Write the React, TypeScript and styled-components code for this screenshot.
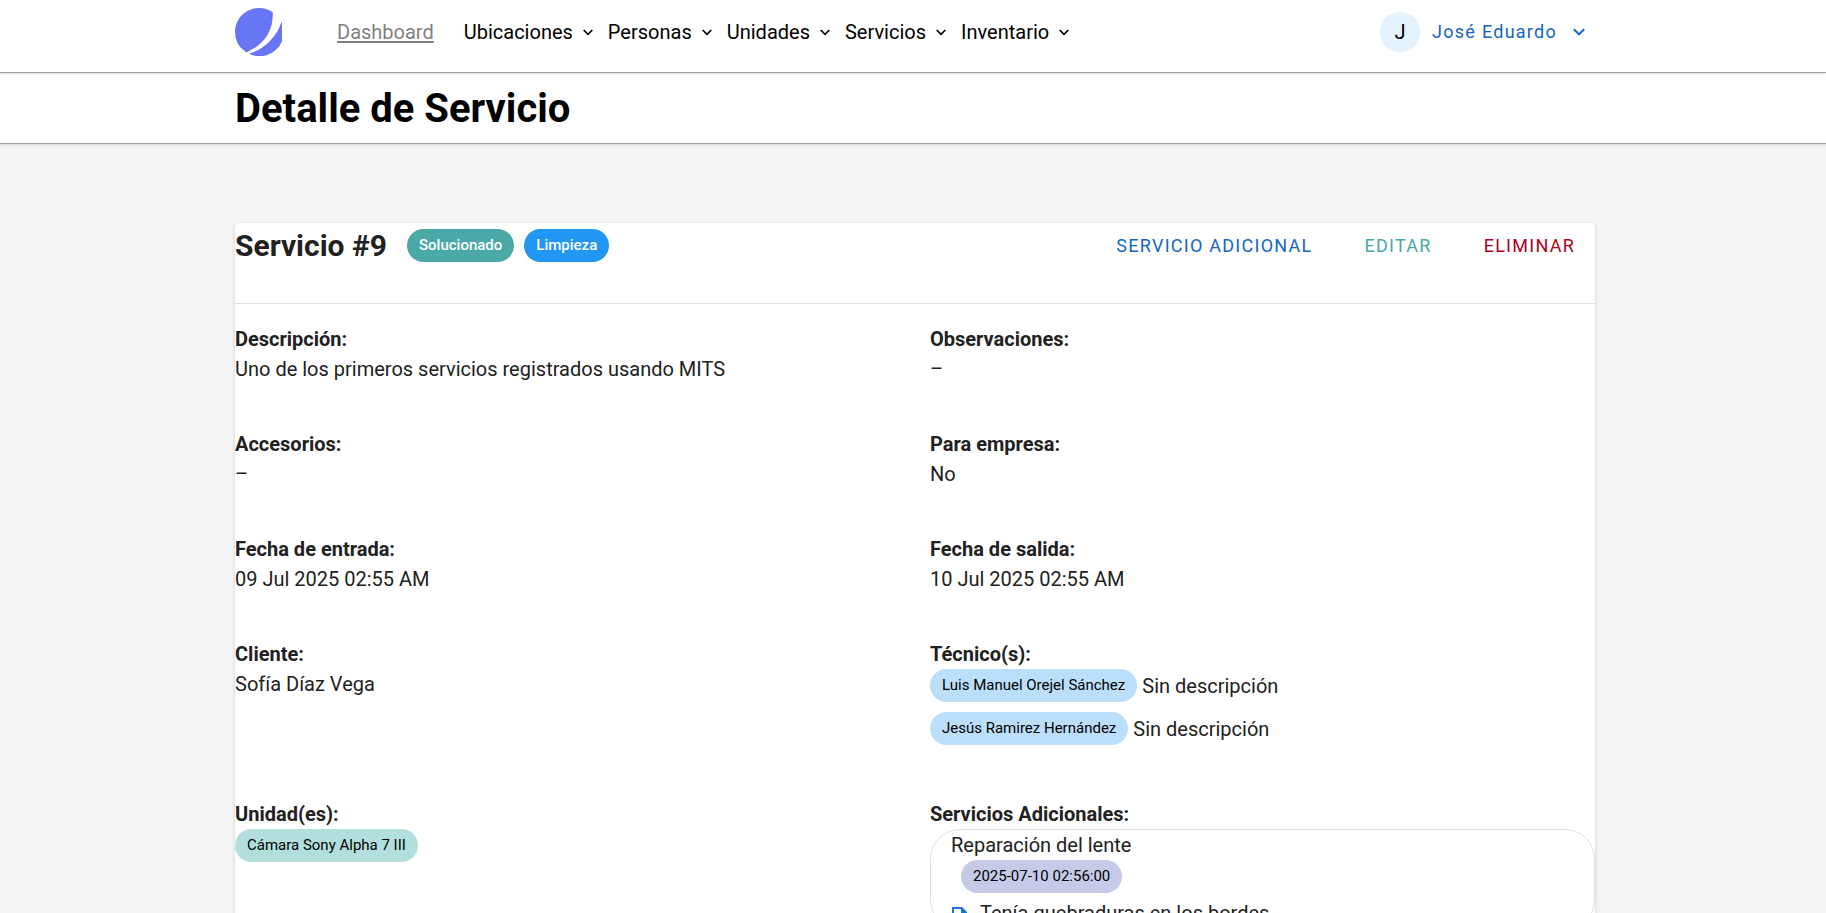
import React from 'react';
import styled, { createGlobalStyle } from 'styled-components';

const GlobalStyle = createGlobalStyle`
  *, *::before, *::after { box-sizing: border-box; }
  body {
    margin: 0;
    background: #f5f5f5;
    color: #212121;
    font-family: Roboto, "Liberation Sans", sans-serif;
    font-size: 20px;
    line-height: 30px;
  }
`;

const Container = styled.div`
  margin: 0 231px 0 235px;
`;

const Bar = styled.div`
  position: relative;
  background: #fff;
  border-bottom: 1px solid #a0a0a0;
  box-shadow: 0 1px 2px rgba(0, 0, 0, 0.15);
`;

const TopBar = styled(Bar)`
  z-index: 1;
`;

const TopBarInner = styled(Container)`
  display: flex;
  align-items: center;
  height: 72px;
  padding-bottom: 8px;
`;

const LogoLink = styled.a`
  display: flex;
  margin-right: 55px;
`;

const Nav = styled.nav`
  display: flex;
  align-items: center;
`;

const DashboardLink = styled.a`
  color: #7f7f7f;
  margin-right: 30px;
  text-underline-offset: 2px;
`;

const NavButton = styled.button`
  display: flex;
  align-items: center;
  gap: 10px;
  margin-right: 15px;
  padding: 0;
  border: 0;
  background: none;
  color: #000;
  font: inherit;
`;

const UserButton = styled.button`
  display: flex;
  align-items: center;
  margin-left: auto;
  padding: 0 10px 0 0;
  border: 0;
  background: none;
  color: #1565c0;
  font: inherit;
  font-size: 18px;
  letter-spacing: 0.07em;
`;

const UserName = styled.span`
  margin: 0 16px 0 12px;
`;

const Avatar = styled.span`
  display: flex;
  align-items: center;
  justify-content: center;
  width: 40px;
  height: 40px;
  border-radius: 50%;
  background: #e3f2fd;
  color: #000;
  font-size: 20px;
  letter-spacing: 0;
`;

const PageTitle = styled.h1`
  margin: 0;
  padding: 6px 0 4px;
  color: #000;
  font-size: 40px;
  line-height: 60px;
`;

const Card = styled.main`
  margin: 79px 231px 60px 235px;
  border-radius: 5px;
  background: #fff;
  box-shadow: 0 1px 4px rgba(0, 0, 0, 0.15);
`;

const CardHeader = styled.div`
  display: flex;
  align-items: flex-start;
  height: 81px;
  border-bottom: 1px solid #e0e0e0;
`;

const CardTitle = styled.h2`
  margin: 0 20px 0 0;
  font-size: 30px;
  line-height: 45px;
`;

const Badges = styled.div`
  display: flex;
  gap: 10px;
  padding-top: 6px;
`;

const Actions = styled.div`
  display: flex;
  gap: 12px;
  margin-left: auto;
`;

const ActionButton = styled.button<{ $color: string }>`
  height: 45px;
  padding: 0 20px;
  border: 0;
  background: none;
  color: ${(p) => p.$color};
  font: inherit;
  font-size: 18px;
  letter-spacing: 0.07em;
  text-transform: uppercase;
`;

const Pill = styled.span<{ $bg: string; $color?: string; $weight?: number }>`
  display: inline-block;
  height: 33px;
  padding: 0 12px;
  border-radius: 17px;
  background: ${(p) => p.$bg};
  color: ${(p) => p.$color ?? '#000'};
  font-size: 15px;
  font-weight: ${(p) => p.$weight ?? 400};
  line-height: 32px;
  vertical-align: top;
`;

const Details = styled.dl`
  display: grid;
  grid-template-columns: 1fr 1fr;
  gap: 45px 30px;
  margin: 0;
  padding: 20px 0 45px;
`;

const Term = styled.dt`
  font-weight: 700;
`;

const Value = styled.dd`
  margin: 0;
`;

const Technicians = styled.ul`
  display: flex;
  flex-direction: column;
  gap: 10px;
  margin: 0;
  padding: 0 0 9px;
  list-style: none;
`;

const Technician = styled.li`
  display: flex;
  gap: 5px;
  height: 33px;
  line-height: 34px;
`;

const ExtraService = styled.section`
  padding: 0 20px 1px;
  border: 1px solid #e0e0e0;
  border-radius: 30px;
`;

const ExtraDate = styled.div`
  display: flex;
  padding: 0 10px 5px;
`;

const ExtraNote = styled.div`
  display: flex;
  align-items: center;
  gap: 9px;
`;

const ChevronIcon = ({ width = 10, strokeWidth = 1.7 }: { width?: number; strokeWidth?: number }) => (
  <svg width={width} height={(width * 7) / 10} viewBox="0 0 10 7" fill="none" stroke="currentColor" strokeWidth={strokeWidth} aria-hidden="true">
    <path d="M0.7 1 5 5.3 9.3 1" />
  </svg>
);

const Logo = () => (
  <svg width="47" height="48" viewBox="0 0 47 48" fill="#6875f5" aria-hidden="true">
    <path d="M11.4 44.4A24 24 0 0 1 0 24C0 10.7 10.7 0 24 0c5 0 9.8 1.5 13.8 4.2C38.4 25.5 27 37.5 11.4 44.4Z" />
    <path d="M14.1 45.7A24 24 0 0 0 46.5 14.1C41.5 29.5 29 41.5 14.1 45.7Z" />
  </svg>
);

const NoteIcon = () => (
  <svg width="20" height="20" viewBox="0 0 20 20" fill="none" stroke="#1976d2" strokeWidth="2" aria-hidden="true">
    <path d="M2 5h8l5 5v9H2z" />
    <path d="M10 4h1l5 5v2h-6z" fill="#1976d2" stroke="none" />
  </svg>
);

const menus = ['Ubicaciones', 'Personas', 'Unidades', 'Servicios', 'Inventario'];

const fields: [string, React.ReactNode][] = [
  ['Descripción:', 'Uno de los primeros servicios registrados usando MITS'],
  ['Observaciones:', '–'],
  ['Accesorios:', '–'],
  ['Para empresa:', 'No'],
  ['Fecha de entrada:', '09 Jul 2025 02:55 AM'],
  ['Fecha de salida:', '10 Jul 2025 02:55 AM'],
  ['Cliente:', 'Sofía Díaz Vega'],
  [
    'Técnico(s):',
    <Technicians>
      {['Luis Manuel Orejel Sánchez', 'Jesús Ramirez Hernández'].map((name) => (
        <Technician key={name}>
          <Pill $bg="#bbdefb">{name}</Pill>
          <span>Sin descripción</span>
        </Technician>
      ))}
    </Technicians>,
  ],
  ['Unidad(es):', <Pill $bg="#b2dfdb">Cámara Sony Alpha 7 III</Pill>],
  [
    'Servicios Adicionales:',
    <ExtraService>
      <div>Reparación del lente</div>
      <ExtraDate>
        <Pill $bg="#c5cae9">2025-07-10 02:56:00</Pill>
      </ExtraDate>
      <ExtraNote>
        <NoteIcon />
        <span>Tenía quebraduras en los bordes</span>
      </ExtraNote>
    </ExtraService>,
  ],
];

export default function App() {
  return (
    <>
      <GlobalStyle />
      <TopBar as="header">
        <TopBarInner>
          <LogoLink href="#" aria-label="Inicio">
            <Logo />
          </LogoLink>
          <Nav>
            <DashboardLink href="#">Dashboard</DashboardLink>
            {menus.map((label) => (
              <NavButton key={label} type="button">
                {label}
                <ChevronIcon />
              </NavButton>
            ))}
          </Nav>
          <UserButton type="button">
            <Avatar>J</Avatar>
            <UserName>José Eduardo</UserName>
            <ChevronIcon width={12} />
          </UserButton>
        </TopBarInner>
      </TopBar>
      <Bar>
        <Container>
          <PageTitle>Detalle de Servicio</PageTitle>
        </Container>
      </Bar>
      <Card>
        <CardHeader>
          <CardTitle>Servicio #9</CardTitle>
          <Badges>
            <Pill $bg="#4aa9a7" $color="#fff" $weight={500}>Solucionado</Pill>
            <Pill $bg="#2196f3" $color="#fff" $weight={500}>Limpieza</Pill>
          </Badges>
          <Actions>
            <ActionButton type="button" $color="#1565c0">Servicio adicional</ActionButton>
            <ActionButton type="button" $color="#4aa9a7">Editar</ActionButton>
            <ActionButton type="button" $color="#b00020">Eliminar</ActionButton>
          </Actions>
        </CardHeader>
        <Details>
          {fields.map(([label, value]) => (
            <div key={label}>
              <Term>{label}</Term>
              <Value>{value}</Value>
            </div>
          ))}
        </Details>
      </Card>
    </>
  );
}
